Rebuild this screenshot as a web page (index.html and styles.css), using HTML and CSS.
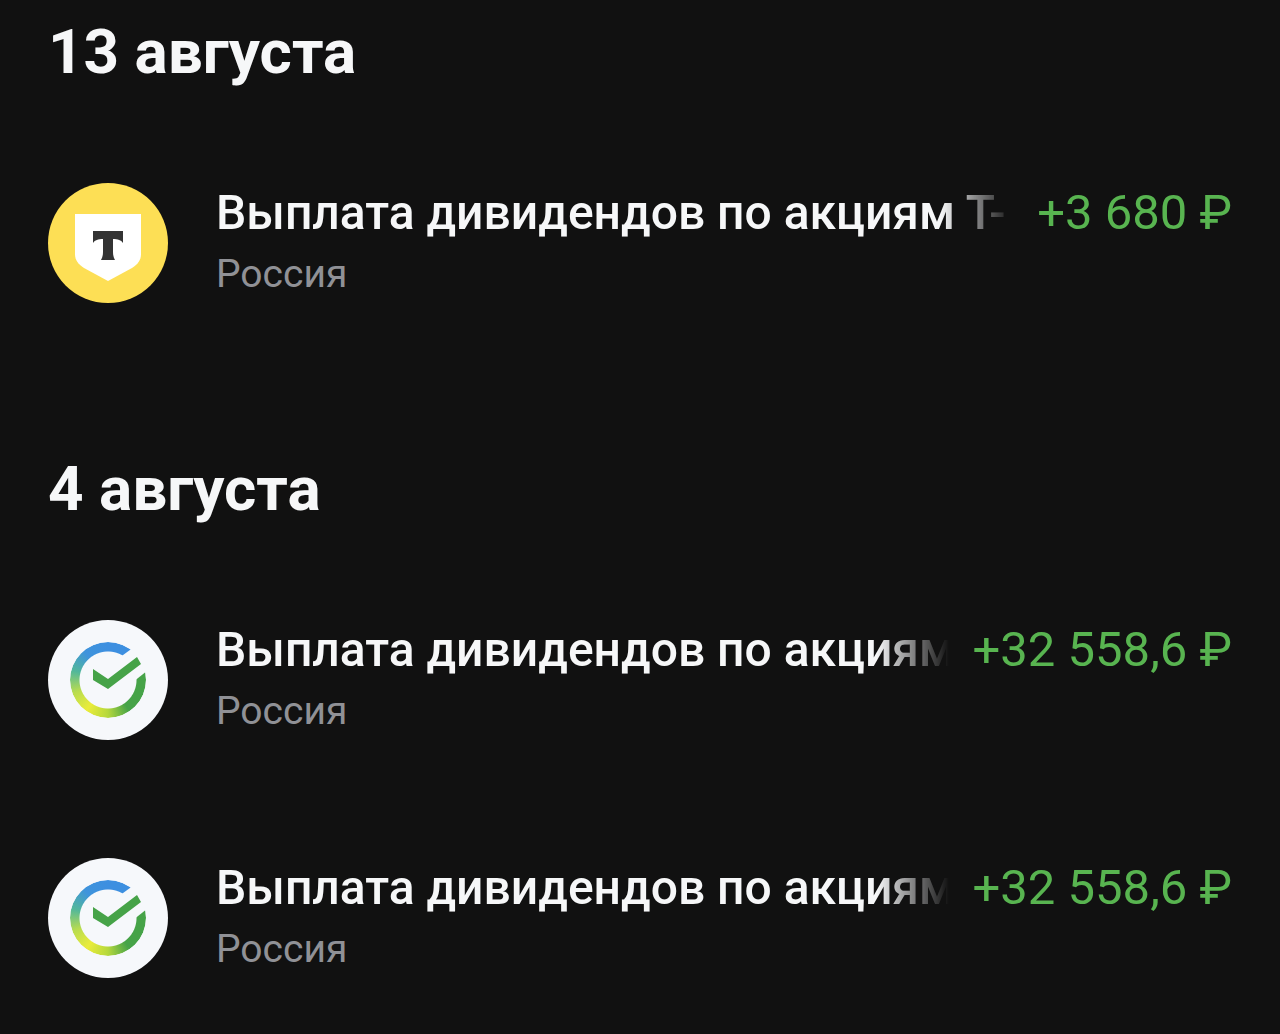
FILE: index.html
```
<!DOCTYPE html>
<html lang="ru">
<head>
    <meta charset="UTF-8">
    <meta name="viewport" content="width=device-width, initial-scale=1.0">
    <title>История операций</title>
    <link rel="stylesheet" href="styles.css">
</head>
<body>
    <main class="feed">
        <section class="day">
            <h2 class="date">13 августа</h2>
            <ul class="list">
                <li class="operation">
                    <svg class="logo" viewBox="0 0 120 120" aria-hidden="true">
                        <circle cx="60" cy="60" r="60" fill="#fddf55"/>
                        <path d="M27 31 H93 V71 C93 77 90 81 84 85 L60 98 L36 85 C30 81 27 77 27 71 Z" fill="#fff"/>
                        <path d="M45 48 H75 V60 C73 57 70 56 65 56 V69 C65 73 66 75 67 77 H53 C54 75 55 73 55 69 V56 C50 56 47 57 45 60 Z" fill="#333"/>
                    </svg>
                    <div class="info">
                        <div class="line">
                            <span class="title">Выплата дивидендов по акциям Т-</span>
                            <span class="amount">+3 680 ₽</span>
                        </div>
                        <div class="country">Россия</div>
                    </div>
                </li>
            </ul>
        </section>

        <section class="day">
            <h2 class="date">4 августа</h2>
            <ul class="list">
                <li class="operation">
                    <div class="logo sber">
                        <div class="ring"></div>
                        <svg class="tick" viewBox="0 0 120 120" aria-hidden="true">
                            <path class="gap" d="M71 38 L86 27 L104 47 L85 62 Z"/>
                            <path d="M45 49 L60 59 L89 37 L93 44 L60 69 L45 60 Z"/>
                        </svg>
                    </div>
                    <div class="info">
                        <div class="line">
                            <span class="title">Выплата дивидендов по акциям</span>
                            <span class="amount">+32 558,6 ₽</span>
                        </div>
                        <div class="country">Россия</div>
                    </div>
                </li>
                <li class="operation">
                    <div class="logo sber">
                        <div class="ring"></div>
                        <svg class="tick" viewBox="0 0 120 120" aria-hidden="true">
                            <path class="gap" d="M71 38 L86 27 L104 47 L85 62 Z"/>
                            <path d="M45 49 L60 59 L89 37 L93 44 L60 69 L45 60 Z"/>
                        </svg>
                    </div>
                    <div class="info">
                        <div class="line">
                            <span class="title">Выплата дивидендов по акциям</span>
                            <span class="amount">+32 558,6 ₽</span>
                        </div>
                        <div class="country">Россия</div>
                    </div>
                </li>
            </ul>
        </section>
    </main>
</body>
</html>
```

FILE: styles.css
```
* {
    box-sizing: border-box;
}
body {
    margin: 0;
    background-color: #111111;
    color: #f6f7f8;
    font-family: Roboto, "Noto Sans", sans-serif;
}
.feed {
    display: flex;
    flex-direction: column;
    gap: 75px;
}
.date {
    margin: 0;
    padding: 16px 48px 36px;
    font-size: 62px;
    line-height: 72px;
    font-weight: 700;
}
.list {
    margin: 0;
    padding: 0;
    list-style: none;
}
.operation {
    display: flex;
    gap: 48px;
    padding: 59px 48px;
}
.logo {
    flex: none;
    width: 120px;
    height: 120px;
}
.info {
    flex: 1;
    min-width: 0;
}
.line {
    display: flex;
    gap: 24px;
    line-height: 60px;
    white-space: nowrap;
}
/* длинное название плавно гаснет перед суммой */
.title {
    flex: 1;
    min-width: 0;
    overflow: hidden;
    font-size: 48px;
    font-weight: 500;
    -webkit-mask-image: linear-gradient(to left, transparent, #000 72px);
    mask-image: linear-gradient(to left, transparent, #000 72px);
}
.amount {
    color: #58b450;
    font-size: 49px;
}
.country {
    padding-top: 2px;
    color: #909196;
    font-size: 39px;
    line-height: 58px;
}

/* Логотип Сбера */
.sber {
    display: grid;
    place-items: center;
    border-radius: 50%;
    background-color: #f6f8fb;
}
.ring,
.tick {
    grid-area: 1 / 1;
}
.ring {
    width: 76px;
    height: 76px;
    border-radius: 50%;
    background: conic-gradient(#3d8fe0 0deg, #3d8fe0 60deg, #46a348 60deg, #46a348 145deg, #b5d83c 180deg, #eaec3a 215deg, #b8dc50 250deg, #52b79b 285deg, #3f94dc 320deg, #3d8fe0 360deg);
    -webkit-mask-image: radial-gradient(circle, transparent 28px, #000 29px);
    mask-image: radial-gradient(circle, transparent 28px, #000 29px);
}
.tick {
    z-index: 1;
    width: 120px;
    height: 120px;
    fill: #46a348;
}
.tick .gap {
    fill: #f6f8fb;
}
```
